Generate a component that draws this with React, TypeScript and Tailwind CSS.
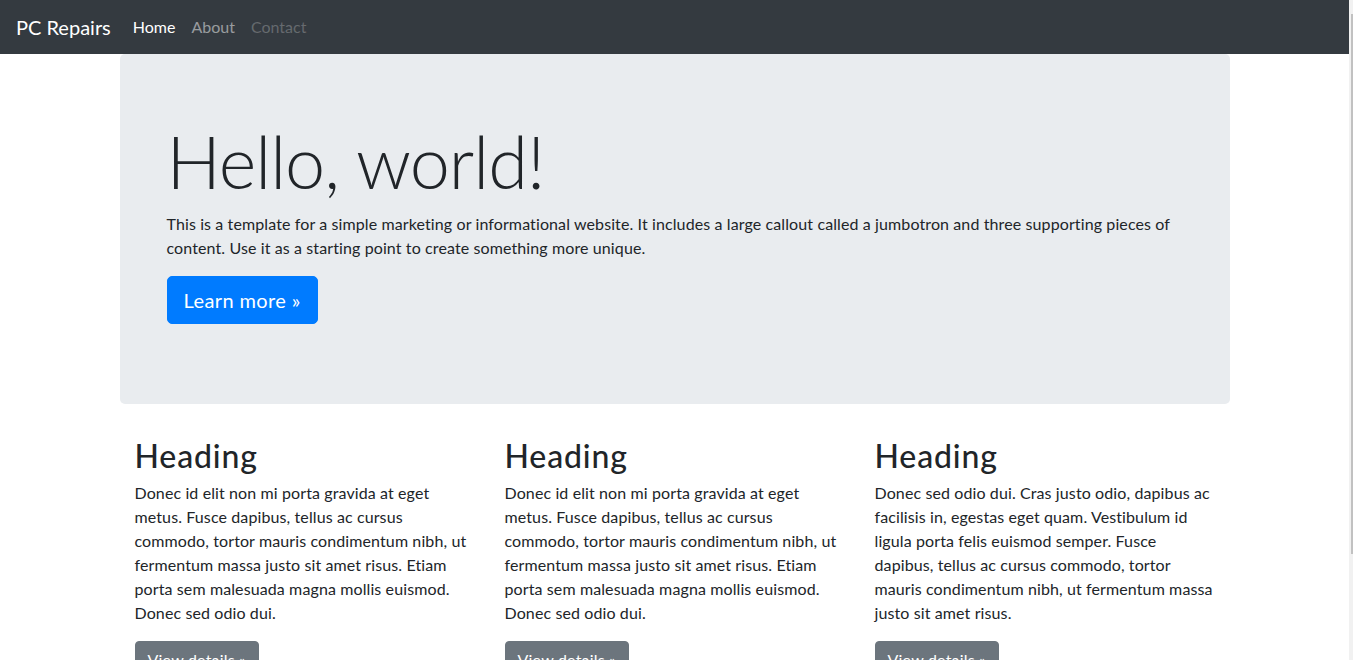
import React from 'react';

const columns = [
  'Donec id elit non mi porta gravida at eget metus. Fusce dapibus, tellus ac cursus commodo, tortor mauris condimentum nibh, ut fermentum massa justo sit amet risus. Etiam porta sem malesuada magna mollis euismod. Donec sed odio dui.',
  'Donec id elit non mi porta gravida at eget metus. Fusce dapibus, tellus ac cursus commodo, tortor mauris condimentum nibh, ut fermentum massa justo sit amet risus. Etiam porta sem malesuada magna mollis euismod. Donec sed odio dui.',
  'Donec sed odio dui. Cras justo odio, dapibus ac facilisis in, egestas eget quam. Vestibulum id ligula porta felis euismod semper. Fusce dapibus, tellus ac cursus commodo, tortor mauris condimentum nibh, ut fermentum massa justo sit amet risus.',
];

export default function App() {
  return (
    <div className="flex h-[660px] w-full overflow-hidden bg-white font-['Lato',sans-serif] text-[#212529]">
      <div className="flex w-[1349px] flex-col">
        {/* navbar */}
        <nav className="flex h-[54px] shrink-0 items-center bg-[#343a40] px-4 pb-[1px]">
          <a className="mr-[14px] text-[20px] text-white">PC Repairs</a>
          <ul className="flex text-[16px]">
            <li className="px-2 text-white">Home</li>
            <li className="px-2 text-white/50">About</li>
            <li className="px-2 text-white/25">Contact</li>
          </ul>
        </nav>

        <main className="mx-auto w-[1140px] px-[15px]">
          {/* jumbotron */}
          <section className="mb-8 rounded-[5px] bg-[#e9ecef] px-8 py-16">
            <div className="px-[15px]">
              <h1 className="mb-2 text-[72px] leading-[1.2] font-light tracking-[-1px]">Hello, world!</h1>
              <p className="mb-4 text-[16px] leading-6 tracking-[0.11px]">
                This is a template for a simple marketing or informational website. It includes a large callout called a jumbotron and three supporting pieces of content. Use it as a starting point to create something more unique.
              </p>
              <p className="mb-4">
                <a className="inline-block rounded-[5px] border border-[#007bff] bg-[#007bff] px-4 py-2 text-[20px] leading-[30px] tracking-[0.4px] text-white">
                  Learn more »
                </a>
              </p>
            </div>
          </section>

          {/* columns */}
          <div className="grid grid-cols-3">
            {columns.map((text, i) => (
              <div key={i} className="px-[15px]">
                <h2 className="mb-2 pt-[3px] text-[32px] leading-[34px] font-medium tracking-[0.85px]">Heading</h2>
                <p className="mb-4 text-[16px] leading-6 tracking-[0.11px]">{text}</p>
                <a className="inline-block rounded-[4px] border border-[#6c757d] bg-[#6c757d] px-3 py-1.5 text-[16px] leading-6 tracking-[0.2px] text-white">
                  View details »
                </a>
              </div>
            ))}
          </div>
        </main>
      </div>

      {/* scrollbar */}
      <div className="w-[4px] bg-[#f1f1f1] pt-[14px] pl-[2px]">
        <div className="h-[540px] w-[2px] bg-[#c1c1c1]" />
      </div>
    </div>
  );
}
